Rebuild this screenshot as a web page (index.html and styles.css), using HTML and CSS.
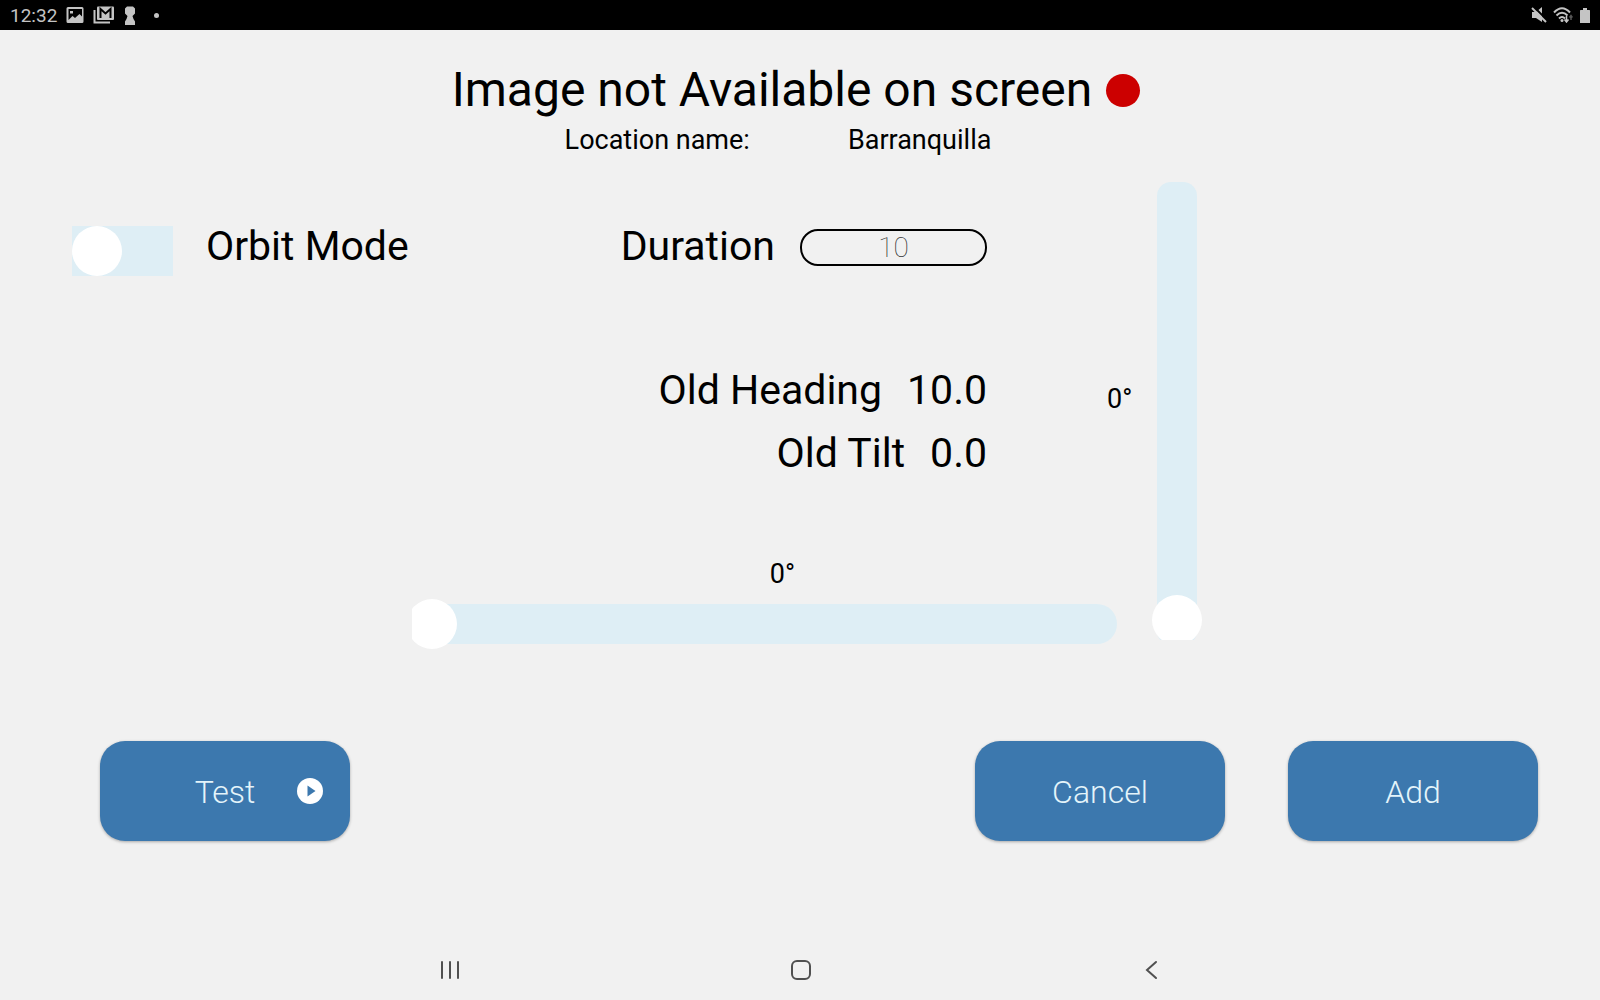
FILE: index.html
```html
<!DOCTYPE html>
<html lang="en">
<head>
    <meta charset="UTF-8">
    <meta name="viewport" content="width=device-width, initial-scale=1.0">
    <title>Location Orbit Settings</title>
    <link rel="stylesheet" href="styles.css">
</head>
<body>
    <!-- Status bar -->
    <div class="status-bar">
        <div class="status-group">
            <span class="clock">12:32</span>
            <svg width="18" height="16" viewBox="0 0 18 16">
                <path fill="#c4c4c4" fill-rule="evenodd" d="M2 0h14a1.5 1.5 0 0 1 1.5 1.5v13a1.5 1.5 0 0 1-1.5 1.5H2a1.5 1.5 0 0 1-1.5-1.5v-13A1.5 1.5 0 0 1 2 0zM2.500 2v11l4-4 2.500 2 4.500-4 2.500 2.500V2zM4 4h3v2.500H4z"/>
            </svg>
            <svg width="22" height="18" viewBox="0 0 22 18">
                <path fill="none" stroke="#c4c4c4" stroke-width="2" d="M1.500 4v12.500H17"/>
                <rect x="4" y="0.500" width="17" height="13.500" rx="1" fill="#c4c4c4"/>
                <path fill="none" stroke="#000" stroke-width="2" d="M7.500 12V3l5 4.500 5-4.500v9"/>
            </svg>
            <svg width="12" height="19" viewBox="0 0 12 19">
                <path fill="#c4c4c4" d="M3 .5h6l2 2v5L8.500 10l1 3 1.500 2.500V19H1v-3.500L2.500 13l1-3L1 7.500v-5z"/>
            </svg>
            <span class="dot"></span>
        </div>
        <div class="status-group status-right">
            <svg width="16" height="16" viewBox="0 0 16 16">
                <path fill="#c4c4c4" d="M1 5h4l6-5v15l-6-4H1z"/>
                <path fill="none" stroke="#000" stroke-width="2" d="M3 0l13 13"/>
                <path fill="none" stroke="#c4c4c4" stroke-width="2" d="M1 1l14 14"/>
            </svg>
            <svg width="20" height="16" viewBox="0 0 20 16">
                <path fill="none" stroke="#c4c4c4" stroke-width="2" d="M1 5.500q8-8.500 16 0M3.500 8.500q5.500-5.500 11 0M6 11.500q3-3 6 0"/>
                <circle cx="9" cy="13.500" r="1.500" fill="#c4c4c4"/>
                <path fill="none" stroke="#c4c4c4" stroke-width="1.500" d="M13.500 9v6M11.500 12.500l2 2.500 2-2.500"/>
                <path fill="none" stroke="#555" stroke-width="1.500" d="M18 13V8.500M16.500 10.500L18 8.500l1.500 2"/>
            </svg>
            <svg width="12" height="17" viewBox="0 0 12 17">
                <path fill="#c4c4c4" d="M4 1h4v2h2.500l.5.500V16H1V3.500L1.500 3H4z"/>
            </svg>
        </div>
    </div>

    <!-- Title and location -->
    <header class="header">
        <div class="title">
            <h1>Image not Available on screen</h1>
            <span class="indicator"></span>
        </div>
        <div class="location">
            <span>Location name:</span>
            <span>Barranquilla</span>
        </div>
    </header>

    <main>
        <div class="settings">
            <div class="orbit">
                <input type="checkbox" id="orbitMode" class="toggle">
                <label for="orbitMode">Orbit Mode</label>
            </div>

            <div class="heading-column">
                <div class="duration">
                    <label for="duration">Duration</label>
                    <input type="text" id="duration" class="duration-input" placeholder="10">
                </div>
                <div class="old-values">
                    <div class="old-row"><span>Old Heading</span><span>10.0</span></div>
                    <div class="old-row"><span>Old Tilt</span><span>0.0</span></div>
                </div>
                <label for="heading" class="degrees heading-degrees">0°</label>
                <div class="slider slider-heading">
                    <input type="range" id="heading" min="0" max="360" value="0">
                </div>
            </div>

            <div class="tilt-column">
                <label for="tilt" class="degrees tilt-degrees">0°</label>
                <div class="slider slider-tilt">
                    <input type="range" id="tilt" min="0" max="90" value="0">
                </div>
            </div>
        </div>

        <div class="actions">
            <button type="button" class="btn btn-test">
                Test
                <svg class="play" width="26" height="26" viewBox="0 0 26 26">
                    <circle cx="13" cy="13" r="13" fill="#fff"/>
                    <path fill="#3c78ae" d="M10.500 7.500l8 5.500-8 5.500z"/>
                </svg>
            </button>
            <button type="button" class="btn">Cancel</button>
            <button type="button" class="btn">Add</button>
        </div>
    </main>

    <!-- System navigation -->
    <nav class="nav-bar">
        <button type="button" aria-label="Recent apps">
            <svg width="20" height="20" viewBox="0 0 20 20">
                <path fill="none" stroke="#505050" stroke-width="2" stroke-linecap="round" d="M2 2v16M10 2v16M18 2v16"/>
            </svg>
        </button>
        <button type="button" aria-label="Home">
            <svg width="22" height="22" viewBox="0 0 22 22">
                <rect x="2" y="2" width="18" height="18" rx="5" fill="none" stroke="#505050" stroke-width="2"/>
            </svg>
        </button>
        <button type="button" aria-label="Back">
            <svg width="20" height="20" viewBox="0 0 20 20">
                <path fill="none" stroke="#505050" stroke-width="2" stroke-linecap="round" d="M14 2L5 10l9 8"/>
            </svg>
        </button>
    </nav>
</body>
</html>
```
FILE: styles.css
```css
* {
    box-sizing: border-box;
}
body {
    font-family: Roboto, sans-serif;
    margin: 0;
    min-height: 100vh;
    display: flex;
    flex-direction: column;
    background-color: #f1f1f1;
    color: #000;
}

/* Status bar */
.status-bar {
    display: flex;
    justify-content: space-between;
    align-items: center;
    height: 30px;
    padding: 0 9px 0 10px;
    background-color: #000;
    color: #c4c4c4;
}
.status-group {
    display: flex;
    align-items: center;
    gap: 9px;
}
.status-right {
    gap: 6px;
}
.clock {
    font-size: 19px;
}
.dot {
    width: 5px;
    height: 5px;
    margin-left: 9px;
    border-radius: 50%;
    background-color: #c4c4c4;
}

/* Header */
.header {
    padding-top: 32px;
}
.title {
    display: flex;
    justify-content: center;
    align-items: center;
    gap: 14px;
    padding-right: 8px;
}
h1 {
    margin: 0;
    font-size: 48px;
    font-weight: 400;
    line-height: 56px;
}
.indicator {
    width: 34px;
    height: 33px;
    border-radius: 50%;
    background-color: #c00;
}
.location {
    display: flex;
    justify-content: center;
    gap: 98px;
    margin-top: 6px;
    padding-right: 44px;
    font-size: 27px;
    line-height: 32px;
}

/* Settings */
.settings {
    display: grid;
    grid-template-columns: 412fr 705fr 483fr;
    margin-top: 26px;
    font-size: 41px;
    line-height: 50px;
}
.orbit {
    display: flex;
    align-items: flex-start;
    gap: 33px;
    padding: 39px 0 0 72px;
    white-space: nowrap;
}
.toggle {
    appearance: none;
    flex: none;
    width: 101px;
    height: 50px;
    margin: 5px 0 0;
    background-color: #deeef5;
    cursor: pointer;
}
.toggle::before {
    content: "";
    display: block;
    width: 50px;
    height: 50px;
    border-radius: 50%;
    background-color: #fff;
}
.toggle:checked::before {
    margin-left: auto;
}
.heading-column {
    padding-top: 39px;
}
.duration,
.old-row {
    display: flex;
    justify-content: flex-end;
    align-items: center;
    gap: 25px;
    padding-right: 130px;
}
.duration-input {
    width: 187px;
    height: 37px;
    margin: 2px 0 0;
    padding: 0;
    border: 2px solid #000;
    border-radius: 18px;
    background: none;
    font-family: inherit;
    font-size: 28px;
    font-weight: 100;
    text-align: center;
}
.duration-input::placeholder {
    color: #333;
}
.old-values {
    display: grid;
    gap: 13px;
    margin-top: 94px;
}
.degrees {
    font-size: 27px;
    line-height: 32px;
}
.heading-degrees {
    display: block;
    margin-top: 80px;
    padding-left: 36px;
    text-align: center;
}

/* Sliders, the thumb is cut off at the zero end */
.slider {
    overflow: hidden;
}
.slider input {
    appearance: none;
    display: block;
    margin: 0;
    background: none;
    cursor: pointer;
}
.slider input::-webkit-slider-runnable-track {
    border-radius: 20px;
    background-color: #deeef5;
}
.slider input::-webkit-slider-thumb {
    appearance: none;
    width: 50px;
    height: 50px;
    border-radius: 50%;
    background-color: #fff;
}
.slider-heading {
    margin-top: 9px;
}
.slider-heading input {
    width: calc(100% + 5px);
    height: 50px;
    margin-left: -5px;
}
.slider-heading input::-webkit-slider-runnable-track {
    height: 40px;
}
.slider-heading input::-webkit-slider-thumb {
    margin-top: -5px;
}
.tilt-column {
    display: flex;
    align-items: center;
    align-self: start;
    gap: 20px;
    margin-left: -10px;
}
.tilt-degrees {
    padding-bottom: 24px;
}
.slider-tilt {
    height: 458px;
}
.slider-tilt input {
    writing-mode: vertical-lr;
    direction: rtl;
    width: 50px;
    height: calc(100% + 5px);
}
.slider-tilt input::-webkit-slider-runnable-track {
    width: 40px;
    border-radius: 14px;
}
.slider-tilt input::-webkit-slider-thumb {
    margin-left: -5px;
}

/* Buttons */
.actions {
    display: flex;
    gap: 63px;
    margin-top: 92px;
    padding: 0 62px 0 100px;
}
.btn {
    position: relative;
    width: 250px;
    height: 100px;
    padding: 2px 0 0;
    border: none;
    border-radius: 25px;
    background-color: #3c78ae;
    box-shadow: 0 1px 3px rgba(0, 0, 0, 0.3);
    color: #e4f4fa;
    font-family: inherit;
    font-size: 32px;
    font-weight: 300;
    cursor: pointer;
}
.btn-test {
    margin-right: auto;
}
.play {
    position: absolute;
    right: 27px;
    top: 37px;
}

/* Navigation */
.nav-bar {
    display: grid;
    grid-template-columns: repeat(3, 1fr);
    width: 66%;
    height: 60px;
    margin: auto auto 0;
    padding-left: 2px;
}
.nav-bar button {
    display: flex;
    justify-content: center;
    align-items: center;
    padding: 0;
    border: none;
    background: none;
    cursor: pointer;
}
```
